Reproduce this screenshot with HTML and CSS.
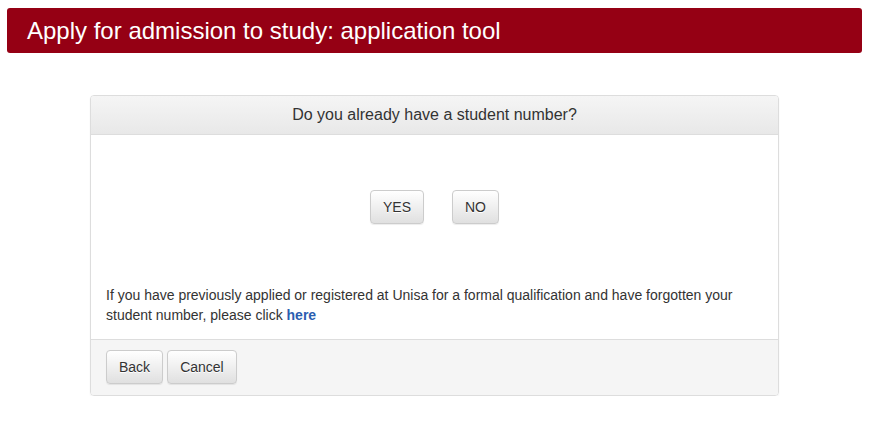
FILE: index.html
```html
<!DOCTYPE html>
<html>
<head>
<meta charset="utf-8">
<link rel="stylesheet" href="styles.css">
</head>
<body>
<div class="page">
  <div class="banner">Apply for admission to study: application tool</div>
  <div class="panel">
    <div class="panel-heading">Do you already have a student number?</div>
    <div class="panel-body">
      <div class="choices">
        <button class="btn">YES</button>
        <button class="btn">NO</button>
      </div>
      <p class="note">If you have previously applied or registered at Unisa for a formal qualification and have forgotten your student number, please click <a href="#">here</a></p>
    </div>
    <div class="panel-footer">
      <button class="btn">Back</button>
      <button class="btn">Cancel</button>
    </div>
  </div>
</div>
</body>
</html>
```
FILE: styles.css
```css
* { box-sizing: border-box; }
html, body { margin: 0; padding: 0; background: #fff; }
body {
  font-family: "Liberation Sans", Arial, sans-serif;
  font-size: 14px;
  color: #333;
}
.page {
  width: 869px;
  padding: 8px 7px 0 7px;
}
.banner {
  background: #950014;
  color: #fff;
  font-size: 24px;
  line-height: 45px;
  height: 45px;
  padding-left: 20px;
  border-radius: 3px;
}
.panel {
  width: 689px;
  margin: 42px auto 0;
  border: 1px solid #ddd;
  border-radius: 4px;
  box-shadow: 0 1px 2px rgba(0,0,0,0.05);
  overflow: hidden;
}
.panel-heading {
  background: linear-gradient(to bottom, #f5f5f5, #e8e8e8);
  border-bottom: 1px solid #ddd;
  text-align: center;
  font-size: 16px;
  height: 39px;
  line-height: 38px;
  color: #333;
}
.panel-body {
  padding: 55px 15px 0 15px;
  background: #fff;
}
.choices {
  display: flex;
  justify-content: center;
  gap: 28px;
}
.btn {
  font-family: "Liberation Sans", Arial, sans-serif;
  font-size: 14px;
  color: #333;
  height: 34px;
  padding: 0 12px;
  line-height: 32px;
  border: 1px solid #ccc;
  border-radius: 4px;
  background: linear-gradient(to bottom, #fff, #e0e0e0);
  box-shadow: inset 0 1px 0 rgba(255,255,255,0.15), 0 1px 1px rgba(0,0,0,0.075);
  text-shadow: 0 1px 0 #fff;
  cursor: pointer;
}
.note {
  margin: 61px 0 0 0;
  padding-bottom: 14px;
  line-height: 20px;
  color: #333;
}
.note a {
  color: #2a5db0;
  font-weight: bold;
  text-decoration: none;
}
.panel-footer {
  background: #f5f5f5;
  border-top: 1px solid #ddd;
  padding: 10px 15px 11px;
  display: flex;
  gap: 4px;
}
```
